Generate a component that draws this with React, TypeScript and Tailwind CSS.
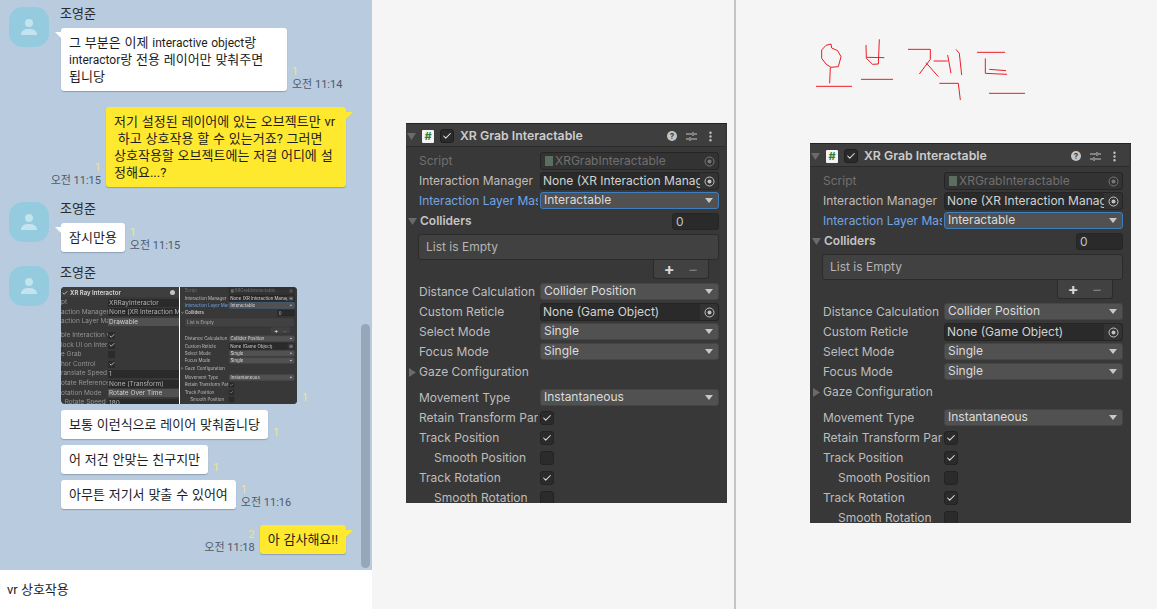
import React from 'react';
import { Check, EllipsisVertical } from 'lucide-react';

type InspectorRow =
  | { kind: 'object'; label: string; value: string; dim?: boolean }
  | { kind: 'select'; label: string; value: string; active?: boolean; mt?: boolean }
  | { kind: 'check'; label: string; checked: boolean; indent?: boolean };

function Triangle({ open = true }: { open?: boolean }) {
  return (
    <svg width="9" height="9" viewBox="0 0 9 9" className="shrink-0">
      <path d={open ? 'M0 1H9L4.5 8Z' : 'M1 0V9L8 4.5Z'} fill="#6a6a6a" />
    </svg>
  );
}

function Picker({ dim }: { dim?: boolean }) {
  return (
    <div className="flex h-full w-[18px] shrink-0 items-center justify-center rounded-r-[3px] bg-[#333333]">
      <svg width="11" height="11" viewBox="0 0 11 11">
        <circle cx="5.5" cy="5.5" r="4.5" fill="none" stroke={dim ? '#777777' : '#c4c4c4'} strokeWidth="1" />
        <circle cx="5.5" cy="5.5" r="2" fill={dim ? '#777777' : '#c4c4c4'} />
      </svg>
    </div>
  );
}

function Row({ row }: { row: InspectorRow }) {
  const labelColor =
    row.kind === 'select' && row.active
      ? 'text-[#6ea6e8]'
      : row.kind === 'object' && row.dim
        ? 'text-[#707070]'
        : 'text-[#bdbdbd]';
  return (
    <div className={`flex h-5 items-center pl-[13px] ${row.kind === 'select' && row.mt ? 'mt-[6px]' : ''}`}>
      <div className={`h-5 w-[119px] mr-[2px] shrink-0 overflow-hidden whitespace-nowrap leading-5 ${labelColor} ${row.kind === 'check' && row.indent ? 'pl-[15px]' : ''}`}>
        {row.label}
      </div>
      {row.kind === 'object' && (
        <div className={`flex h-[18px] w-[179px] items-center overflow-hidden rounded-[3px] border border-[#252525] ${row.dim ? 'bg-[#333333] text-[#707070]' : 'bg-[#2a2a2a] text-[#d2d2d2]'}`}>
          <div className="flex min-w-0 flex-1 items-center gap-[2px] overflow-hidden whitespace-nowrap pl-[2px]">
            {row.dim && <div className="ml-[2px] h-[10px] w-[8px] shrink-0 bg-[#5b6e60]" />}
            {row.value}
          </div>
          <Picker dim={row.dim} />
        </div>
      )}
      {row.kind === 'select' && (
        <div className={`-mt-[1px] flex h-[17px] w-[179px] items-center justify-between rounded-[3px] bg-[#515151] pl-[3px] pr-[5px] text-[#dcdcdc] ${row.active ? 'border border-[#3f7fc0]' : 'border border-[#454545]'}`}>
          <span className="-mt-[1px]">{row.value}</span>
          <svg width="8" height="5" viewBox="0 0 8 5"><path d="M0 0H8L4 5Z" fill="#c8c8c8" /></svg>
        </div>
      )}
      {row.kind === 'check' && (
        <div className="flex h-[14px] w-[14px] items-center justify-center rounded-[3px] border border-[#232323] bg-[#2b2b2b]">
          {row.checked && <Check size={10} strokeWidth={2.5} className="text-[#e4e4e4]" />}
        </div>
      )}
    </div>
  );
}

const topRows: InspectorRow[] = [
  { kind: 'object', label: 'Script', value: 'XRGrabInteractable', dim: true },
  { kind: 'object', label: 'Interaction Manager', value: 'None (XR Interaction Manag' },
  { kind: 'select', label: 'Interaction Layer Mask', value: 'Interactable', active: true },
];

const midRows: InspectorRow[] = [
  { kind: 'select', label: 'Distance Calculation', value: 'Collider Position' },
  { kind: 'object', label: 'Custom Reticle', value: 'None (Game Object)' },
  { kind: 'select', label: 'Select Mode', value: 'Single' },
  { kind: 'select', label: 'Focus Mode', value: 'Single' },
];

const bottomRows: InspectorRow[] = [
  { kind: 'select', label: 'Movement Type', value: 'Instantaneous', mt: true },
  { kind: 'check', label: 'Retain Transform Parent', checked: true },
  { kind: 'check', label: 'Track Position', checked: true },
  { kind: 'check', label: 'Smooth Position', checked: false, indent: true },
  { kind: 'check', label: 'Track Rotation', checked: true },
  { kind: 'check', label: 'Smooth Rotation', checked: false, indent: true },
];

function Inspector() {
  return (
    <div className="h-[380px] w-[321px] overflow-hidden border-t border-[#232323] bg-[#383838] pr-[2px] font-['Inter',sans-serif] text-[12px]">
      <div className="flex h-[23px] items-center border-b border-[#2c2c2c] bg-[#3e3e3e] pl-[1px] pt-[2px]">
        <Triangle />
        <div className="ml-[6px] flex h-[13px] w-[12px] items-center justify-center rounded-[1px] bg-[#f4f4f4] text-[11px] font-bold leading-none text-[#2f7d3a]">#</div>
        <div className="ml-[6px] flex h-[14px] w-[14px] items-center justify-center rounded-[3px] border border-[#1f1f1f] bg-[#2a2a2a]">
          <Check size={10} strokeWidth={2.5} className="text-[#e4e4e4]" />
        </div>
        <div className="ml-[6px] text-[12.3px] font-semibold text-[#cdcdcd]">XR Grab Interactable</div>
        <div className="ml-auto flex items-center pr-[8px]">
          <div className="flex h-[10px] w-[10px] items-center justify-center rounded-full bg-[#c4c4c4] text-[8px] font-bold leading-none text-[#3e3e3e]">?</div>
          <svg width="11" height="11" viewBox="0 0 11 11" className="ml-[9px]" fill="none" stroke="#c4c4c4" strokeWidth="1">
            <path d="M0 3H6M8 3H11M7 1V5" />
            <path d="M0 8H3M5 8H11M4 6V10" />
          </svg>
          <EllipsisVertical size={13} strokeWidth={2.5} className="ml-[7px] text-[#c4c4c4]" />
        </div>
      </div>
      <div className="pt-[4px]">
        {topRows.map((r) => <Row key={r.label} row={r} />)}
        <div className="flex h-5 items-center pl-[2px]">
          <Triangle />
          <span className="ml-[3px] font-semibold text-[#c4c4c4]">Colliders</span>
          <div className="ml-auto mr-[6px] h-[17px] w-[47px] rounded-[3px] border border-[#252525] bg-[#2a2a2a] pl-[3px] leading-[16px] text-[#c4c4c4]">0</div>
        </div>
        <div className="ml-[12px] mr-[6px] mt-[3px] h-[26px] rounded-[3px] border border-[#2b2b2b] bg-[#414141] pl-[7px] leading-[24px] text-[#b4b4b4]">List is Empty</div>
        <div className="ml-auto mr-[16px] flex h-[19px] w-[56px] items-center justify-center gap-[13px] rounded-b-[3px] border border-t-0 border-[#2b2b2b] bg-[#414141] text-[16px] leading-none">
          <span className="font-bold text-[#d8d8d8]">+</span>
          <span className="text-[#7c7c7c]">−</span>
        </div>
        <div className="mt-[3px]">
          {midRows.map((r) => <Row key={r.label} row={r} />)}
        </div>
        <div className="flex h-5 items-center pl-[2px] text-[#bdbdbd]">
          <Triangle open={false} />
          <span className="ml-[2px]">Gaze Configuration</span>
        </div>
        {bottomRows.map((r) => <Row key={r.label} row={r} />)}
      </div>
    </div>
  );
}

const rayRows: [string, string, 'field' | 'select' | 'on' | 'off'][] = [
  ['pt', 'XRRayInteractor', 'field'],
  ['action Manager', 'None (XR Interaction Man', 'field'],
  ['action Layer Mas', 'Drawable', 'select'],
  ['ble Interaction wit', '', 'on'],
  ['lock UI on Interac', '', 'on'],
  ['e Grab', '', 'off'],
  ['hor Control', '', 'on'],
  ['ranslate Speed', '1', 'field'],
  ['otate Reference F', 'None (Transform)', 'field'],
  ['otation Mode', 'Rotate Over Time', 'select'],
  ['  Rotate Speed', '180', 'field'],
];

function Thumbnail() {
  return (
    <div className="relative h-[117px] w-[236px] overflow-hidden rounded-[4px] bg-[#383838]">
      <div className="h-full w-[118px] overflow-hidden font-['Inter',sans-serif] text-[6.5px] text-[#949494] blur-[0.35px]">
        <div className="flex h-[10px] items-center bg-[#3e3e3e] pl-[1px] pt-[1px] text-[6px] font-bold text-[#cccccc]">
          <Check size={6} strokeWidth={3} className="text-[#e4e4e4]" />
          <span className="ml-[2px] whitespace-nowrap">XR Ray Interactor</span>
          <div className="ml-auto mr-[4px] h-[5px] w-[5px] rounded-full bg-[#c4c4c4]" />
        </div>
        <div className="pt-[1px]">
          {rayRows.map(([label, value, kind], i) => (
            <div key={label} className={`flex h-[9.6px] items-center ${i === 3 ? 'mt-[4px]' : ''}`}>
              <div className="w-[47px] shrink-0 overflow-hidden whitespace-pre leading-[9px]">{label}</div>
              {kind === 'field' && <div className="h-[8px] flex-1 overflow-hidden whitespace-nowrap bg-[#2a2a2a] pl-[1px] leading-[8px] text-[#b0b0b0]">{value}</div>}
              {kind === 'select' && <div className="h-[8px] flex-1 overflow-hidden whitespace-nowrap bg-[#515151] pl-[1px] leading-[8px] text-[#d0d0d0]">{value}</div>}
              {(kind === 'on' || kind === 'off') && (
                <div className="flex h-[7px] w-[7px] items-center justify-center bg-[#2b2b2b]">
                  {kind === 'on' && <Check size={6} strokeWidth={3} className="text-[#e4e4e4]" />}
                </div>
              )}
            </div>
          ))}
        </div>
      </div>
      <div className="absolute left-[118px] top-0 h-full w-[1px] bg-white" />
      <div className="absolute left-[119px] top-[-10px] origin-top-left scale-[0.366] blur-[0.6px]">
        <Inspector />
      </div>
    </div>
  );
}

function Avatar() {
  return (
    <div className="flex h-10 w-10 shrink-0 items-center justify-center rounded-[14px] bg-[#95cbdf]">
      <svg width="18" height="18" viewBox="0 0 18 18">
        <circle cx="9" cy="5" r="4" fill="#c3e3ee" />
        <path d="M1 17C1 12 5 11 9 11C13 11 17 12 17 17Z" fill="#c3e3ee" />
      </svg>
    </div>
  );
}

function Meta({ unread, time, right }: { unread: string; time?: string; right?: boolean }) {
  return (
    <div className={`flex shrink-0 flex-col justify-end text-[11px] ${time ? '-mb-[1px]' : ''} ${right ? 'mr-[5px] items-end' : 'ml-[5px] items-start'}`}>
      <span className="leading-[12px] text-[#ece58f]">{unread}</span>
      {time && <span className="leading-[14px] text-[#4d5a6c]">{time}</span>}
    </div>
  );
}

function Latin({ children }: { children: React.ReactNode }) {
  return <span className="text-[12px] leading-none">{children}</span>;
}

function Bubble({ yellow, tail, className = '', children }: { yellow?: boolean; tail?: boolean; className?: string; children: React.ReactNode }) {
  return (
    <div className={`relative rounded-[3px] px-2 py-[6px] text-[13px] leading-[17px] text-[#1d1d1d] [word-spacing:0.6px] shadow-[0_1px_1px_rgba(60,80,110,0.35)] ${yellow ? 'bg-[#fee92f]' : 'bg-white'} ${className}`}>
      {tail && !yellow && (
        <svg width="7" height="7" viewBox="0 0 7 7" className="absolute left-[-6px] top-[4px]">
          <path d="M0 0H7V7Z" fill="#ffffff" />
        </svg>
      )}
      {tail && yellow && (
        <svg width="7" height="7" viewBox="0 0 7 7" className="absolute right-[-7px] top-[5px]">
          <path d="M7 0H0V7Z" fill="#fee92f" />
        </svg>
      )}
      {children}
    </div>
  );
}

function Incoming({ className = '', children }: { className?: string; children: React.ReactNode }) {
  return (
    <div className={`flex pl-[9px] ${className}`}>
      <Avatar />
      <div className="ml-[12px] min-w-0">
        <div className="-ml-[1px] h-[21px] text-[13px] leading-[14px] text-[#2a2a2a]">조영준</div>
        {children}
      </div>
    </div>
  );
}

function Chat() {
  return (
    <div className="relative flex h-[609px] w-[372px] shrink-0 flex-col bg-[#b9cbde] font-['Roboto','Noto_Sans_CJK_KR',sans-serif]">
      <div className="h-[570px] overflow-hidden whitespace-nowrap pt-[7px]">
        <Incoming>
          <div className="flex">
            <Bubble tail className="w-[226px]">
              그 부분은 이제 <Latin>interactive object</Latin>랑<br /><Latin>interactor</Latin>랑 전용 레이어만 맞춰주면<br />됩니당
            </Bubble>
            <Meta unread="1" time="오전 11:14" />
          </div>
        </Incoming>

        <div className="mt-[16px] flex justify-end pr-[26px]">
          <Meta right unread="1" time="오전 11:15" />
          <Bubble yellow tail className="w-[240px]">
            저기 설정된 레이어에 있는 오브젝트만 vr<br />&nbsp;하고 상호작용 할 수 있는거죠? 그러면<br />상호작용할 오브젝트에는 저걸 어디에 설<br />정해요...?
          </Bubble>
        </div>

        <Incoming className="mt-[15px]">
          <div className="flex">
            <Bubble tail>잠시만용</Bubble>
            <Meta unread="1" time="오전 11:15" />
          </div>
        </Incoming>

        <Incoming className="mt-[14px]">
          <div className="flex">
            <Thumbnail />
            <Meta unread="1" />
          </div>
          <div className="mt-[6px] flex">
            <Bubble>보통 이런식으로 레이어 맞춰줍니당</Bubble>
            <Meta unread="1" />
          </div>
          <div className="mt-[6px] flex">
            <Bubble>어 저건 안맞는 친구지만</Bubble>
            <Meta unread="1" />
          </div>
          <div className="mt-[6px] flex">
            <Bubble>아무튼 저기서 맞출 수 있어여</Bubble>
            <Meta unread="1" time="오전 11:16" />
          </div>
        </Incoming>

        <div className="mt-[16px] flex justify-end pr-[26px]">
          <Meta right unread="2" time="오전 11:18" />
          <Bubble yellow tail>아 감사해요!!</Bubble>
        </div>
      </div>
      {/* scroll thumb sits over the message list */}
      <div className="absolute right-[2px] top-[324px] h-[244px] w-[9px] rounded-[5px] bg-[#95a7b8]" />
      <div className="flex h-[39px] items-center bg-white pl-[7px] text-[13px] text-[#1d1d1d]">vr 상호작용</div>
    </div>
  );
}

function Scribble() {
  return (
    <svg width="422" height="143" viewBox="15 -60 1266 429" className="block" fill="none" stroke="#ee1c25" strokeWidth="3" strokeLinejoin="round">
      <path d="M300 72L285 76L272 90L272 115L285 132L300 142L322 140L330 110L320 92L302 84L300 72" />
      <path d="M298 142L296 190" />
      <path d="M255 199H363" />
      <path d="M405 75L406 115L425 133L442 132L445 58" />
      <path d="M408 112L460 113" />
      <path d="M390 178H486" />
      <path d="M531 88H598V118L565 162" />
      <path d="M585 128L622 170" />
      <path d="M608 123H650" />
      <path d="M650 105L660 160" />
      <path d="M675 88L685 100L692 165" />
      <path d="M625 190H682L688 240" />
      <path d="M738 97H822" />
      <path d="M763 115V160L828 163" />
      <path d="M775 148L825 152" />
      <path d="M774 220H882" />
    </svg>
  );
}

export default function App() {
  return (
    <div className="flex h-[609px] w-[1157px] overflow-hidden bg-[#f5f5f5]">
      <Chat />
      <div className="w-[362px] shrink-0 pl-[34px] pt-[123px]">
        <Inspector />
      </div>
      <div className="w-[2px] shrink-0 bg-[#c4c4c4]" />
      <div className="flex-1">
        <Scribble />
        <div className="ml-[74px]">
          <Inspector />
        </div>
      </div>
    </div>
  );
}
